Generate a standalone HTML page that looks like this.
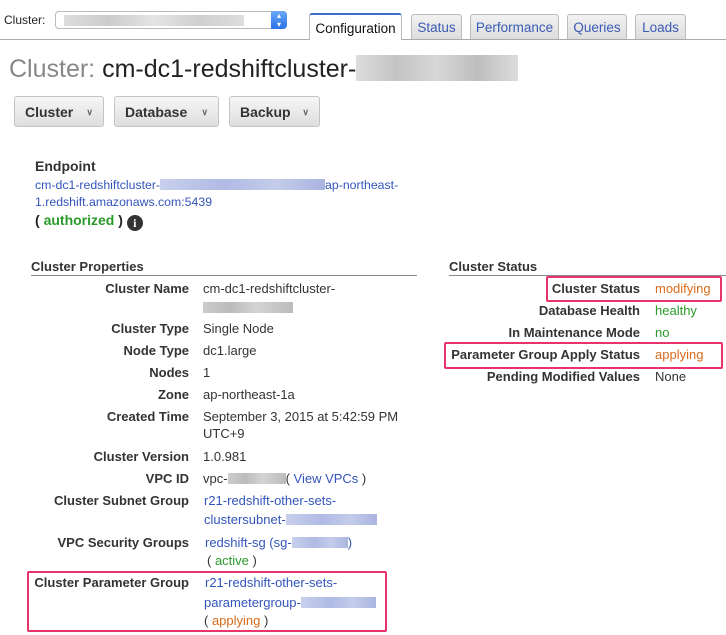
<!DOCTYPE html>
<html><head><style>
body{margin:0;width:726px;height:635px;background:#fff;font-family:"Liberation Sans",Arial,sans-serif;font-size:13px;color:#222;position:relative;overflow:hidden}
.a{position:absolute;white-space:nowrap}
.l{position:absolute;font-weight:bold;text-align:right;white-space:nowrap;color:#333}
.v{position:absolute;white-space:nowrap;color:#333}
.lk{color:#3355bb}
.bl{display:inline-block;height:11px;vertical-align:-1px;background:linear-gradient(90deg,#ccc,#bbb 30%,#d4d4d4 60%,#bbb)}
.bb{background:linear-gradient(90deg,#c8d0ec,#b0bae4 40%,#c4ccea 70%,#aab4e0)}
.tab{position:absolute;top:14px;height:25px;border:1px solid #bbb;border-bottom:none;background:linear-gradient(#f2f2f2,#ddd);color:#3a5bb5;font-size:13.5px;text-align:center;line-height:26px;border-radius:3px 3px 0 0;box-sizing:border-box}
.btn{position:absolute;top:96px;height:31px;border:1px solid #c4c4c4;border-radius:3px;background:linear-gradient(#f6f6f6,#dedede);font-weight:bold;font-size:14px;color:#333;line-height:30px;box-sizing:border-box;padding-left:10px}
.btn i{font-style:normal;font-size:9px;color:#666;position:absolute;right:10px;top:0}
.box{position:absolute;border:2px solid #e8336b;border-radius:2px}
.o{color:#d96a1a}.g{color:#2a9a2a}
</style></head><body>
<div class="a" style="left:4px;top:13px;font-size:12px">Cluster:</div>
<div class="a" style="left:55px;top:11px;width:232px;height:18px;border:1px solid #bbb;border-radius:4px;box-sizing:border-box;background:#fff"><span class="bl" style="position:absolute;left:8px;top:3px;width:180px;background:linear-gradient(90deg,#ddd,#ccc,#e4e4e4,#d0d0d0,#ddd)"></span><span style="position:absolute;right:-1px;top:-1px;width:16px;height:18px;background:linear-gradient(#6aa8f8,#2a72e8);border-radius:0 4px 4px 0;color:#fff;font-size:8px;text-align:center;line-height:9px">▴<br>▾</span></div>
<div style="position:absolute;left:0;top:39px;width:726px;height:1px;background:#aaa"></div>
<div class="tab" style="left:309px;width:93px;top:13px;height:27px;background:#fff;border-top:2px solid #3b6fd0;color:#111;line-height:28px">Configuration</div>
<div class="tab" style="left:411px;width:51px">Status</div>
<div class="tab" style="left:470px;width:89px">Performance</div>
<div class="tab" style="left:567px;width:60px">Queries</div>
<div class="tab" style="left:635px;width:51px">Loads</div>
<div class="a" style="left:9px;top:55px;font-size:25px;color:#888">Cluster: <span style="color:#222">cm-dc1-redshiftcluster-</span><span class="bl" style="width:162px;height:26px;vertical-align:-4px;background:linear-gradient(90deg,#ddd,#c4c4c4,#d8d8d8,#bdbdbd,#ddd)"></span></div>
<div class="btn" style="left:14px;width:90px">Cluster<i>∨</i></div>
<div class="btn" style="left:114px;width:105px">Database<i>∨</i></div>
<div class="btn" style="left:229px;width:91px">Backup<i>∨</i></div>
<div class="a" style="left:35px;top:158px;font-weight:bold;font-size:14px;color:#333">Endpoint</div>
<div class="a lk" style="left:35px;top:178px;font-size:12.3px">cm-dc1-redshiftcluster-<span class="bl bb" style="width:165px"></span>ap-northeast-</div>
<div class="a lk" style="left:35px;top:195px;font-size:12.3px">1.redshift.amazonaws.com:5439</div>
<div class="a" style="left:35px;top:212px;font-weight:bold;font-size:14px">( <span class="g">authorized</span> ) <span style="display:inline-block;width:16px;height:16px;border-radius:50%;background:#333;color:#fff;font-size:12px;text-align:center;line-height:16px;font-family:'Liberation Serif',serif;vertical-align:-2px">i</span></div>
<div class="a" style="left:31px;top:259px;font-weight:bold;color:#333">Cluster Properties</div>
<div style="position:absolute;left:31px;top:275px;width:386px;height:1px;background:#888"></div>
<div class="a" style="left:449px;top:259px;font-weight:bold;color:#333">Cluster Status</div>
<div style="position:absolute;left:449px;top:275px;width:277px;height:1px;background:#888"></div>
<div class="l" style="right:537px;top:281px">Cluster Name</div><div class="v" style="left:203px;top:281px">cm-dc1-redshiftcluster-</div>
<div class="v" style="left:203px;top:300px"><span class="bl" style="width:90px"></span></div>
<div class="l" style="right:537px;top:321px">Cluster Type</div><div class="v" style="left:203px;top:321px">Single Node</div>
<div class="l" style="right:537px;top:343px">Node Type</div><div class="v" style="left:203px;top:343px">dc1.large</div>
<div class="l" style="right:537px;top:365px">Nodes</div><div class="v" style="left:203px;top:365px">1</div>
<div class="l" style="right:537px;top:387px">Zone</div><div class="v" style="left:203px;top:387px">ap-northeast-1a</div>
<div class="l" style="right:537px;top:409px">Created Time</div><div class="v" style="left:203px;top:409px">September 3, 2015 at 5:42:59 PM</div>
<div class="v" style="left:203px;top:426px">UTC+9</div>
<div class="l" style="right:537px;top:449px">Cluster Version</div><div class="v" style="left:203px;top:449px">1.0.981</div>
<div class="l" style="right:537px;top:471px">VPC ID</div><div class="v" style="left:203px;top:471px">vpc-<span class="bl" style="width:58px"></span>( <span class="lk">View VPCs</span> )</div>
<div class="l" style="right:537px;top:493px">Cluster Subnet Group</div><div class="v lk" style="left:204px;top:493px">r21-redshift-other-sets-</div>
<div class="v lk" style="left:204px;top:512px">clustersubnet-<span class="bl bb" style="width:91px"></span></div>
<div class="l" style="right:537px;top:535px">VPC Security Groups</div><div class="v lk" style="left:205px;top:535px">redshift-sg (sg-<span class="bl bb" style="width:56px"></span>)</div>
<div class="v" style="left:207px;top:553px">( <span class="g">active</span> )</div>
<div class="l" style="right:537px;top:575px">Cluster Parameter Group</div><div class="v lk" style="left:205px;top:575px">r21-redshift-other-sets-</div>
<div class="v lk" style="left:204px;top:595px">parametergroup-<span class="bl bb" style="width:75px"></span></div>
<div class="v" style="left:204px;top:613px">( <span class="o">applying</span> )</div>
<div class="box" style="left:27px;top:571px;width:356px;height:57px"></div>
<div class="l" style="right:86px;top:281px">Cluster Status</div><div class="v o" style="left:655px;top:281px">modifying</div>
<div class="l" style="right:86px;top:303px">Database Health</div><div class="v g" style="left:655px;top:303px">healthy</div>
<div class="l" style="right:86px;top:325px">In Maintenance Mode</div><div class="v g" style="left:655px;top:325px">no</div>
<div class="l" style="right:86px;top:347px">Parameter Group Apply Status</div><div class="v o" style="left:655px;top:347px">applying</div>
<div class="l" style="right:86px;top:369px">Pending Modified Values</div><div class="v" style="left:655px;top:369px">None</div>
<div class="box" style="left:546px;top:276px;width:172px;height:22px"></div>
<div class="box" style="left:444px;top:342px;width:275px;height:23px"></div>
</body></html>
